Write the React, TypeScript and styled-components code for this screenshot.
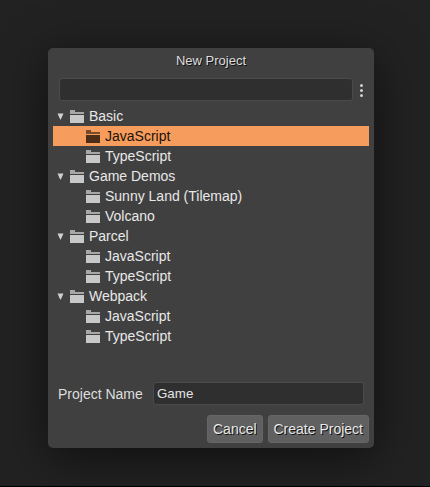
import React, { useState } from "react";
import styled, { createGlobalStyle } from "styled-components";

const GlobalStyle = createGlobalStyle`
  * { box-sizing: border-box; }
  body { margin: 0; background: #222; overflow: hidden; }
`;

const Page = styled.main`
  height: 487px;
  padding: 48px 56px 0 48px;
  background: #222;
  border-bottom: 1px solid #000;
  font: 14px/20px "Liberation Sans", Arial, sans-serif;
  color: #dedede;
`;

const Dialog = styled.section`
  display: flex;
  flex-direction: column;
  width: 326px;
  height: 400px;
  padding: 0 5px 5px;
  background: #404040;
  border-radius: 5px;
  box-shadow: 0 10px 50px rgba(0, 0, 0, 0.55);
`;

const Title = styled.h1`
  margin: 0;
  height: 30px;
  padding-top: 3px;
  font-size: 13px;
  font-weight: 400;
  line-height: 20px;
  text-align: center;
  text-shadow: 1px 1px 0 #111;
`;

const SearchRow = styled.div`
  display: flex;
  align-items: center;
  gap: 7px;
  height: 23px;
  padding-left: 6px;
`;

const TextInput = styled.input<{ $width: number }>`
  width: ${(p) => p.$width}px;
  height: 23px;
  padding: 0 3px 1px;
  border: 1px solid #4b4b4b;
  border-radius: 3px;
  outline: none;
  background: #2f2f2f;
  color: #e4e4e4;
  font: 13.333px "Liberation Sans", Arial, sans-serif;
`;

const MenuButton = styled.button`
  display: flex;
  padding: 2px 0 0;
  border: 0;
  background: none;
`;

const Tree = styled.div`
  flex: 1;
  padding-top: 5px;
`;

const TreeRow = styled.div<{ $child: boolean; $selected: boolean }>`
  display: flex;
  align-items: center;
  height: 20px;
  padding-left: ${(p) => (p.$child ? 33 : 4)}px;
  background: ${(p) => (p.$selected ? "#f69d5e" : "transparent")};
  color: ${(p) => (p.$selected ? "#1c1209" : "#e8e8e8")};
`;

const Arrow = styled.svg`
  width: 7px;
  height: 7px;
  margin-right: 6px;
`;

const FolderIcon = styled.svg`
  width: 14px;
  height: 13px;
  margin: 1px 5px 0 0;
`;

const NameRow = styled.label`
  display: flex;
  align-items: center;
  justify-content: space-between;
  height: 23px;
  padding: 0 5px;
`;

const Actions = styled.footer`
  display: flex;
  justify-content: flex-end;
  gap: 5px;
  margin-top: 10px;
`;

const Button = styled.button<{ $width: number; $inset: number }>`
  display: flex;
  align-items: center;
  width: ${(p) => p.$width}px;
  height: 28px;
  padding: 0 0 0 ${(p) => p.$inset}px;
  border: 1px solid #666;
  border-radius: 3px;
  background: #606060;
  color: #e8e8e8;
  font: 14px "Liberation Sans", Arial, sans-serif;
  white-space: nowrap;
  text-shadow: 1px 1px 0 #111;
`;

const groups = [
  { name: "Basic", items: ["JavaScript", "TypeScript"] },
  { name: "Game Demos", items: ["Sunny Land (Tilemap)", "Volcano"] },
  { name: "Parcel", items: ["JavaScript", "TypeScript"] },
  { name: "Webpack", items: ["JavaScript", "TypeScript"] },
];

function Folder({ dark = false }: { dark?: boolean }) {
  return (
    <FolderIcon viewBox="0 0 14 13" shapeRendering="crispEdges">
      <path d="M0 0h5v2h9v2H0z" fill={dark ? "#774b2b" : "#a8a8a8"} />
      <path d="M0 5h14v8H0z" fill={dark ? "#4b2d18" : "#c8c8c8"} />
    </FolderIcon>
  );
}

export default function App() {
  const [selected, setSelected] = useState("Basic/JavaScript");
  const [name, setName] = useState("Game");
  return (
    <Page>
      <GlobalStyle />
      <Dialog role="dialog" aria-label="New Project">
        <Title>New Project</Title>
        <SearchRow>
          <TextInput $width={294} aria-label="Search" />
          <MenuButton aria-label="Menu">
            <svg width="3" height="13" fill="#d0d0d0">
              <circle cx="1.5" cy="1.5" r="1.5" />
              <circle cx="1.5" cy="6.5" r="1.5" />
              <circle cx="1.5" cy="11.5" r="1.5" />
            </svg>
          </MenuButton>
        </SearchRow>
        <Tree>
          {groups.map((group) => (
            <React.Fragment key={group.name}>
              <TreeRow $child={false} $selected={false}>
                <Arrow viewBox="0 0 7 7">
                  <path d="M.5 .5h6L3.8 6.5h-.6z" fill="#d0d0d0" />
                </Arrow>
                <Folder />
                {group.name}
              </TreeRow>
              {group.items.map((item) => {
                const id = `${group.name}/${item}`;
                return (
                  <TreeRow key={id} $child $selected={id === selected} onClick={() => setSelected(id)}>
                    <Folder dark={id === selected} />
                    {item}
                  </TreeRow>
                );
              })}
            </React.Fragment>
          ))}
        </Tree>
        <NameRow>
          Project Name
          <TextInput $width={211} value={name} onChange={(e) => setName(e.target.value)} />
        </NameRow>
        <Actions>
          <Button $width={56} $inset={5}>Cancel</Button>
          <Button $width={101} $inset={4.5}>Create Project</Button>
        </Actions>
      </Dialog>
    </Page>
  );
}
